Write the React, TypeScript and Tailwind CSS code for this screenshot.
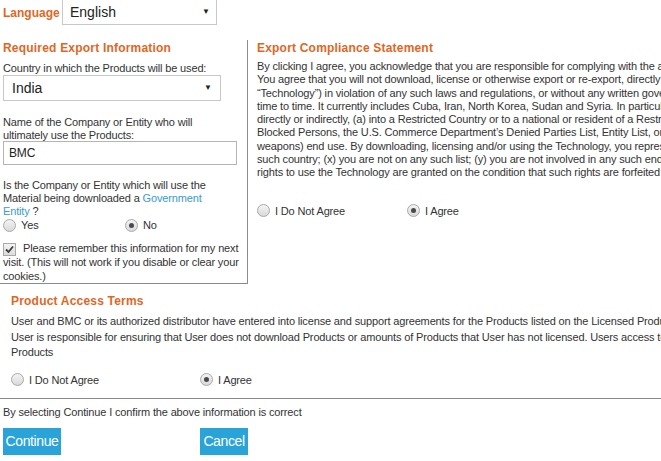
import React from "react";

const FONT = { fontFamily: "'Liberation Sans', Arial, sans-serif" };

function Radio({ checked }: { checked?: boolean }) {
  return (
    <span className="inline-flex h-[13px] w-[13px] shrink-0 items-center justify-center rounded-full border border-[#a9a9a9] bg-gradient-to-b from-[#f4f4f4] to-[#d9d9d9]">
      {checked && <span className="h-[5px] w-[5px] rounded-full bg-[#4a4a4a]" />}
    </span>
  );
}

function Check() {
  return (
    <span className="inline-flex h-[13px] w-[13px] shrink-0 items-center justify-center border border-[#a9a9a9] bg-gradient-to-b from-[#f4f4f4] to-[#dcdcdc]">
      <svg width="9" height="9" viewBox="0 0 9 9">
        <path d="M1 4.5 L3.5 7 L8 1.5" fill="none" stroke="#3c3c3c" strokeWidth="1.8" />
      </svg>
    </span>
  );
}

function Select({ value, className }: { value: string; className: string }) {
  return (
    <div className={`flex items-center justify-between border border-[#c8c8c8] bg-white text-[14px] tracking-normal text-[#222] ${className}`}>
      <span>{value}</span>
      <span className="text-[8px] text-[#222]">▼</span>
    </div>
  );
}

const compliance = [
  "By clicking I agree, you acknowledge that you are responsible for complying with the applicable export control laws and regulations of the United States and other countries.",
  "You agree that you will not download, license or otherwise export or re-export, directly or indirectly, any software, technology or technical data (collectively the",
  "“Technology”) in violation of any such laws and regulations, or without any written governmental authorization that may be required. Restricted countries change from",
  "time to time. It currently includes Cuba, Iran, North Korea, Sudan and Syria. In particular, but without limitation, the Technology may not be exported or re-exported,",
  "directly or indirectly, (a) into a Restricted Country or to a national or resident of a Restricted Country; or (b) to anyone on the U.S. Treasury Department's list of",
  "Blocked Persons, the U.S. Commerce Department’s Denied Parties List, Entity List, or Unverified List; or (c) for any prohibited (nuclear, chemical or biological",
  "weapons) end use. By downloading, licensing and/or using the Technology, you represent and warrant that: (w) you are not located in, under the control of, or a national of any",
  "such country; (x) you are not on any such list; (y) you are not involved in any such end use; and (z) you will comply with all such laws. You understand that your",
  "rights to use the Technology are granted on the condition that such rights are forfeited if you fail to comply with these terms.",
];

const access = [
  "User and BMC or its authorized distributor have entered into license and support agreements for the Products listed on the Licensed Products page.",
  "User is responsible for ensuring that User does not download Products or amounts of Products that User has not licensed. Users access to the",
  "Products",
];

export default function App() {
  return (
    <div className="h-[461px] w-[661px] overflow-hidden bg-white text-[11px] tracking-[-0.15px] text-[#333]" style={FONT}>
      {/* language */}
      <div className="flex items-center">
        <span className="ml-[3px] w-[59px] text-[12px] font-bold tracking-normal text-[#e2661f]">Language</span>
        <Select value="English" className="h-[26px] w-[155px] -mt-[1px] pl-[7px] pr-[6px]" />
      </div>

      <div className="mt-[13px] flex">
        {/* left */}
        <div className="w-[247px] shrink-0 border-b border-[#8a8a8a] pl-[3px]">
          <div className="mt-[1px] text-[12px] font-bold tracking-[0.2px] text-[#e2661f]">Required Export Information</div>
          <div className="mt-[4px] leading-[14px]">Country in which the Products will be used:</div>
          <Select value="India" className="h-[26px] w-[218px] pl-[8px] pr-[8px]" />
          <div className="mt-[15px] leading-[13px]">
            Name of the Company or Entity who will
            <br />
            ultimately use the Products:
          </div>
          <div className="-mt-[1px] flex h-[24px] w-[234px] items-center border border-[#b5b5b5] pl-[5px] text-[12px] text-[#222]">
            BMC
          </div>
          <div className="mt-[14px] leading-[13px]">
            Is the Company or Entity which will use the
            <br />
            Material being downloaded a <span className="text-[#3a9bd0]">Government</span>
            <br />
            <span className="text-[#3a9bd0]">Entity</span> ?
          </div>
          <div className="mt-[1px] flex items-center leading-[13px]">
            <span className="flex w-[122px] items-center gap-[5px]">
              <Radio />
              Yes
            </span>
            <span className="flex items-center gap-[5px]">
              <Radio checked />
              No
            </span>
          </div>
          <div className="mt-[10px] leading-[13.5px]">
            <span className="inline-flex items-center align-[-2px]">
              <Check />
            </span>
            <span className="ml-[7px]">Please remember this information for my next</span>
            <br />
            visit. (This will not work if you disable or clear your
            <br />
            cookies.)
          </div>
        </div>

        {/* right */}
        <div className="min-w-0 flex-1 border-l border-[#8a8a8a] pl-[9px] mt-[2px]">
          <div className="-mt-[1px] text-[12px] font-bold tracking-[0.2px] text-[#e2661f]">Export Compliance Statement</div>
          <div className="mt-[3px] whitespace-nowrap leading-[13.3px]">
            {compliance.map((l) => (
              <div key={l}>{l}</div>
            ))}
          </div>
          <div className="mt-[23px] flex items-center">
            <span className="flex w-[150px] items-center gap-[5px]">
              <Radio />
              I Do Not Agree
            </span>
            <span className="flex items-center gap-[5px]">
              <Radio checked />
              I Agree
            </span>
          </div>
        </div>
      </div>

      {/* product access */}
      <div className="pl-[11px]">
        <div className="mt-[8px] text-[12px] font-bold tracking-[0.2px] text-[#e2661f]">Product Access Terms</div>
        <div className="mt-[4px] whitespace-nowrap leading-[15.5px]">
          {access.map((l) => (
            <div key={l}>{l}</div>
          ))}
        </div>
        <div className="mt-[11px] flex items-center">
          <span className="flex w-[189px] items-center gap-[5px]">
            <Radio />
            I Do Not Agree
          </span>
          <span className="flex items-center gap-[5px]">
            <Radio checked />
            I Agree
          </span>
        </div>
      </div>

      <div className="mt-[10px] border-t border-[#8a8a8a]" />
      <div className="ml-[3px] mt-[5px]">By selecting Continue I confirm the above information is correct</div>

      <div className="mt-[7px] flex">
        <div className="ml-[3px] flex h-[27px] w-[58px] items-center justify-center bg-[#2aa3d9] text-[14px] tracking-[-0.4px] text-white">
          Continue
        </div>
        <div className="ml-[139px] flex h-[27px] w-[48px] items-center justify-center bg-[#2aa3d9] text-[14px] tracking-[-0.4px] text-white">
          Cancel
        </div>
      </div>
    </div>
  );
}
